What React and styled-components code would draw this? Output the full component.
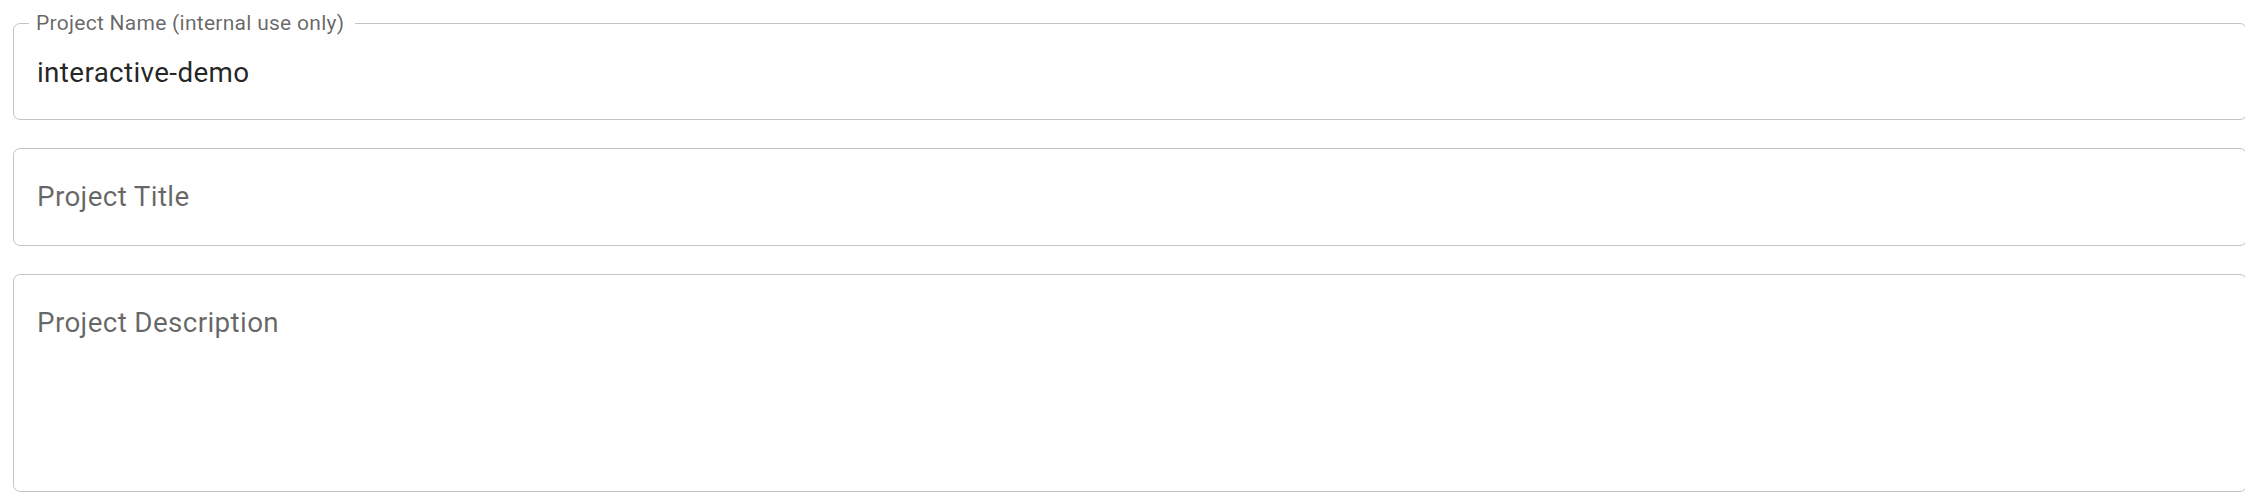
import React from 'react';
import styled, { createGlobalStyle } from 'styled-components';

const GlobalStyle = createGlobalStyle`
html, body {
  margin: 0;
  padding: 0;
  background: #fff;
  overflow: hidden;
}
body {
  font-family: Roboto, "Liberation Sans", Arial, sans-serif;
}
`;

const Form = styled.form`
display: flex;
flex-direction: column;
gap: 28.5px;
width: 2234px;
padding: 13px 0 0 13px;
`;

const Outlined = styled.fieldset`
margin: 0;
padding: 0;
min-width: 0;
border: 1px solid rgba(0, 0, 0, 0.23);
border-radius: 7px;
box-sizing: border-box;
`;

const Legend = styled.legend`
margin-left: 15px;
padding: 0 11px 0 7px;
font-size: 21px;
line-height: 21px;
color: rgba(0, 0, 0, 0.6);
letter-spacing: 0.013em;
`;

const Value = styled.div`
padding: 18.6px 23px 26.6px;
font-size: 27.8px;
line-height: 39.8px;
color: rgba(0, 0, 0, 0.87);
letter-spacing: 0.013em;
`;

const Box = styled.div`
box-sizing: border-box;
height: ${p => p.$tall ? '218px' : '97.5px'};
padding: 27.6px 23px;
border: 1px solid rgba(0, 0, 0, 0.23);
border-radius: 7px;
font-size: 27.8px;
line-height: 39.8px;
color: rgba(0, 0, 0, 0.6);
letter-spacing: 0.013em;
`;

export default function App() {
    return (
    <>
        <GlobalStyle />
        <Form>
            <Outlined>
                <Legend>Project Name (internal use only)</Legend>
                <Value>interactive-demo</Value>
            </Outlined>
            <Box>Project Title</Box>
            <Box $tall>Project Description</Box>
        </Form>
    </>
    )
}
